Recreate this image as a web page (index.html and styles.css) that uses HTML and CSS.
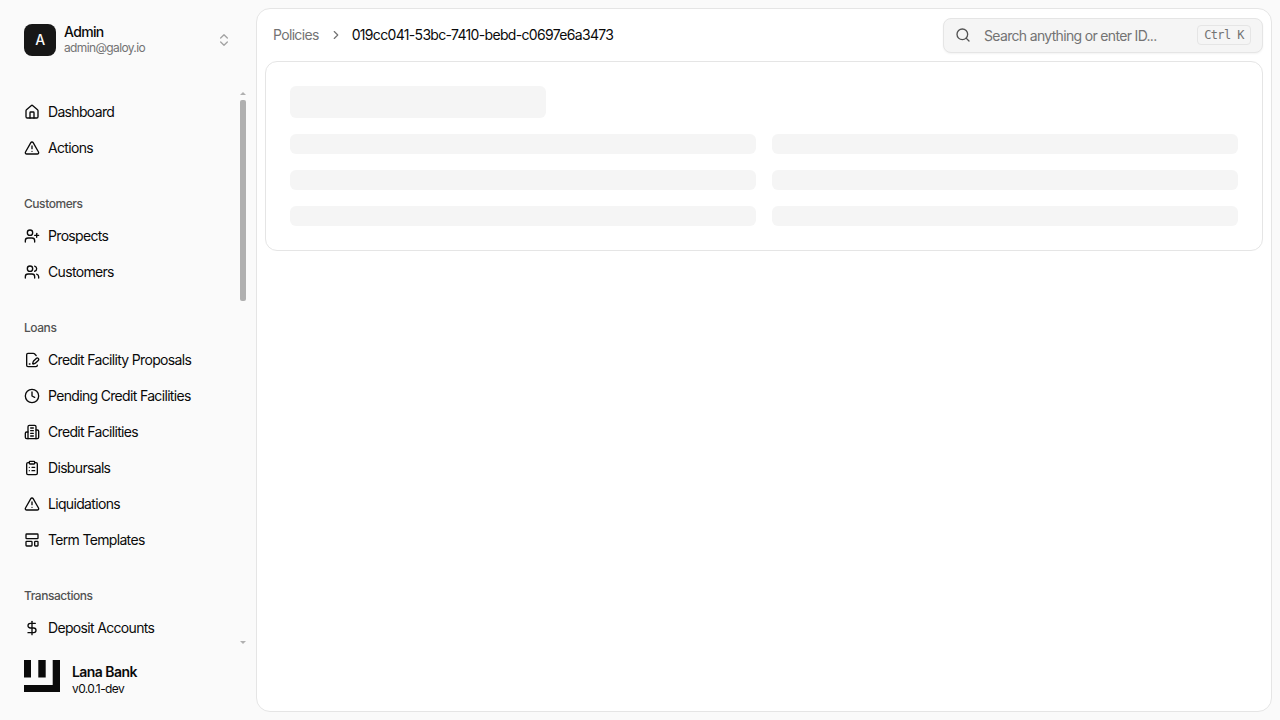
FILE: index.html
```html
<!DOCTYPE html>
<html lang="en">
<head>
<meta charset="utf-8">
<title>Lana Bank</title>
<link rel="stylesheet" href="styles.css">
</head>
<body>
<aside class="sidebar">
  <div class="user">
    <div class="avatar">A</div>
    <div class="user-text">
      <div class="user-name">Admin</div>
      <div class="user-email">admin@galoy.io</div>
    </div>
    <svg class="chevrons" viewBox="0 0 24 24"><path d="m7 15 5 5 5-5"/><path d="m7 9 5-5 5 5"/></svg>
  </div>
  <div class="nav-wrap">
    <nav class="nav">
      <div class="group">
        <a class="item"><svg class="icon" viewBox="0 0 24 24"><path d="M15 21v-8a1 1 0 0 0-1-1h-4a1 1 0 0 0-1 1v8"/><path d="M3 10a2 2 0 0 1 .709-1.528l7-5.999a2 2 0 0 1 2.582 0l7 5.999A2 2 0 0 1 21 10v9a2 2 0 0 1-2 2H5a2 2 0 0 1-2-2z"/></svg>Dashboard</a>
        <a class="item"><svg class="icon" viewBox="0 0 24 24"><path d="m21.73 18-8-14a2 2 0 0 0-3.48 0l-8 14A2 2 0 0 0 4 21h16a2 2 0 0 0 1.73-3"/><path d="M12 9v4"/><path d="M12 17h.01"/></svg>Actions</a>
      </div>
      <div class="group">
        <div class="label">Customers</div>
        <a class="item"><svg class="icon" viewBox="0 0 24 24"><path d="M16 21v-2a4 4 0 0 0-4-4H6a4 4 0 0 0-4 4v2"/><circle cx="9" cy="7" r="4"/><path d="M19 8v6"/><path d="M22 11h-6"/></svg>Prospects</a>
        <a class="item"><svg class="icon" viewBox="0 0 24 24"><path d="M16 21v-2a4 4 0 0 0-4-4H6a4 4 0 0 0-4 4v2"/><circle cx="9" cy="7" r="4"/><path d="M22 21v-2a4 4 0 0 0-3-3.87"/><path d="M16 3.13a4 4 0 0 1 0 7.75"/></svg>Customers</a>
      </div>
      <div class="group">
        <div class="label">Loans</div>
        <a class="item"><svg class="icon" viewBox="0 0 24 24"><path d="m18.226 5.226-2.52-2.52A2.4 2.4 0 0 0 14 2H6a2 2 0 0 0-2 2v16a2 2 0 0 0 2 2h12a2 2 0 0 0 2-2v-.351"/><path d="M21.378 12.626a1 1 0 0 0-3.004-3.004l-4.01 4.012a2 2 0 0 0-.506.854l-.837 2.87a.5.5 0 0 0 .62.62l2.87-.837a2 2 0 0 0 .854-.506z"/><path d="M8 18h1"/></svg>Credit Facility Proposals</a>
        <a class="item"><svg class="icon" viewBox="0 0 24 24"><circle cx="12" cy="12" r="10"/><path d="M12 6v6l4 2"/></svg>Pending Credit Facilities</a>
        <a class="item"><svg class="icon" viewBox="0 0 24 24"><path d="M6 22V4a2 2 0 0 1 2-2h8a2 2 0 0 1 2 2v18Z"/><path d="M6 12H4a2 2 0 0 0-2 2v6a2 2 0 0 0 2 2h2"/><path d="M18 9h2a2 2 0 0 1 2 2v9a2 2 0 0 1-2 2h-2"/><path d="M10 6h4"/><path d="M10 10h4"/><path d="M10 14h4"/><path d="M10 18h4"/></svg>Credit Facilities</a>
        <a class="item"><svg class="icon" viewBox="0 0 24 24"><rect x="8" y="2" width="8" height="4" rx="1"/><path d="M16 4h2a2 2 0 0 1 2 2v14a2 2 0 0 1-2 2H6a2 2 0 0 1-2-2V6a2 2 0 0 1 2-2h2"/><path d="M12 11h4"/><path d="M12 16h4"/><path d="M8 11h.01"/><path d="M8 16h.01"/></svg>Disbursals</a>
        <a class="item"><svg class="icon" viewBox="0 0 24 24"><path d="m21.73 18-8-14a2 2 0 0 0-3.48 0l-8 14A2 2 0 0 0 4 21h16a2 2 0 0 0 1.73-3"/><path d="M12 9v4"/><path d="M12 17h.01"/></svg>Liquidations</a>
        <a class="item"><svg class="icon" viewBox="0 0 24 24"><rect x="3" y="3" width="18" height="7" rx="1"/><rect x="3" y="14" width="9" height="7" rx="1"/><rect x="16" y="14" width="5" height="7" rx="1"/></svg>Term Templates</a>
      </div>
      <div class="group">
        <div class="label">Transactions</div>
        <a class="item"><svg class="icon" viewBox="0 0 24 24"><line x1="12" x2="12" y1="2" y2="22"/><path d="M17 5H9.5a3.5 3.5 0 0 0 0 7h5a3.5 3.5 0 0 1 0 7H6"/></svg>Deposit Accounts</a>
      </div>
    </nav>
    <div class="scrollbar">
      <div class="arrow-up"></div>
      <div class="thumb"></div>
      <div class="arrow-down"></div>
    </div>
  </div>
  <div class="brand">
    <svg class="logo" viewBox="0 0 36 32"><path d="M0 0h7v17.500H0zM14.300 0h7.400v17.500h-7.400zM28.700 0H36v32H0v-7h28.700z"/></svg>
    <div class="brand-text">
      <div class="brand-name">Lana Bank</div>
      <div class="brand-version">v0.0.1-dev</div>
    </div>
  </div>
</aside>
<main class="main">
  <header class="topbar">
    <div class="crumbs">
      <span class="crumb-link">Policies</span>
      <svg class="crumb-sep" viewBox="0 0 24 24"><path d="m9 18 6-6-6-6"/></svg>
      <span class="crumb-current">019cc041-53bc-7410-bebd-c0697e6a3473</span>
    </div>
    <div class="search">
      <svg class="search-icon" viewBox="0 0 24 24"><path d="m21 21-4.34-4.34"/><circle cx="11" cy="11" r="8"/></svg>
      <span class="search-text">Search anything or enter ID...</span>
      <kbd class="kbd">Ctrl K</kbd>
    </div>
  </header>
  <section class="card">
    <div class="skel skel-title"></div>
    <div class="skel-grid">
      <div class="skel skel-row"></div>
      <div class="skel skel-row"></div>
      <div class="skel skel-row"></div>
      <div class="skel skel-row"></div>
      <div class="skel skel-row"></div>
      <div class="skel skel-row"></div>
    </div>
  </section>
</main>
</body>
</html>
```
FILE: styles.css
```css
* { box-sizing: border-box; }
html, body { height: 100%; }
body {
  margin: 0;
  display: flex;
  height: 720px;
  overflow: hidden;
  background: #fafafa;
  color: #0a0a0a;
  font-family: Inter, "Liberation Sans", sans-serif;
  font-size: 14px;
  line-height: 20px;
  letter-spacing: -0.67px;
}
.sidebar {
  width: 256px;
  flex: none;
  display: flex;
  flex-direction: column;
  height: 720px;
}
.user {
  display: flex;
  align-items: center;
  height: 88px;
  padding: 0 24px 8px;
  flex: none;
}
.avatar {
  width: 32px;
  height: 32px;
  border-radius: 8px;
  background: #171717;
  color: #fafafa;
  display: flex;
  align-items: center;
  justify-content: center;
  font-weight: 500;
}
.user-text { flex: 1; margin-left: 8px; }
.user-name { font-weight: 500; height: 16px; line-height: 16px; }
.user-email { font-size: 12px; line-height: 16px; color: #737373; letter-spacing: -0.64px; }
.chevrons {
  width: 16px;
  height: 16px;
  fill: none;
  stroke: #a3a3a3;
  stroke-width: 2;
  stroke-linecap: round;
  stroke-linejoin: round;
}
.nav-wrap {
  position: relative;
  flex: 1;
  min-height: 0;
  margin: 0 10px 0 8px;
}
.nav {
  height: 100%;
  padding-top: 8px;
  overflow: hidden;
  display: flex;
  flex-direction: column;
  gap: 23px;
}
.scrollbar {
  position: absolute;
  top: 0;
  right: 0;
  bottom: 0;
  width: 6px;
  display: flex;
  flex-direction: column;
}
.arrow-up {
  width: 0;
  height: 0;
  margin-top: 4px;
  border-left: 3px solid transparent;
  border-right: 3px solid transparent;
  border-bottom: 3px solid #b0b0b0;
}
.thumb {
  height: 201px;
  margin-top: 5px;
  background: #b0b0b0;
  border-radius: 2px;
}
.arrow-down {
  width: 0;
  height: 0;
  margin: auto 0 6px;
  border-left: 3px solid transparent;
  border-right: 3px solid transparent;
  border-top: 3px solid #b0b0b0;
}
.group { display: flex; flex-direction: column; gap: 4px; flex: none; }
.label {
  height: 29px;
  padding: 5px 16px 0;
  display: flex;
  align-items: center;
  font-size: 12px;
  font-weight: 500;
  color: #525252;
  letter-spacing: -0.45px;
}
.item {
  height: 32px;
  padding: 0 16px;
  display: flex;
  align-items: center;
  gap: 8px;
  color: #0a0a0a;
  border-radius: 6px;
}
.icon {
  width: 16px;
  height: 16px;
  flex: none;
  fill: none;
  stroke: currentColor;
  stroke-width: 2;
  stroke-linecap: round;
  stroke-linejoin: round;
}
.brand {
  height: 70px;
  flex: none;
  display: flex;
  align-items: flex-start;
  gap: 12px;
  padding: 10px 24px 0;
}
.logo { width: 36px; height: 32px; fill: #0a0a0a; flex: none; }
.brand-text { margin-top: 2px; }
.brand-name { font-weight: 600; line-height: 20px; letter-spacing: -0.55px; }
.brand-version { font-size: 12px; line-height: 14px; letter-spacing: -0.6px; }
.main {
  width: 1016px;
  height: 704px;
  margin-top: 8px;
  background: #fff;
  border: 1px solid #e5e5e5;
  border-radius: 14px;
  padding: 0 8px;
}
.topbar {
  height: 52px;
  display: flex;
  align-items: center;
  justify-content: space-between;
}
.crumbs { display: flex; align-items: center; padding-left: 8px; }
.crumb-link { color: #737373; }
.crumb-sep {
  width: 14px;
  height: 14px;
  margin: 0 9px 0 10px;
  fill: none;
  stroke: #737373;
  stroke-width: 2;
  stroke-linecap: round;
  stroke-linejoin: round;
}
.search {
  width: 320px;
  height: 35px;
  display: flex;
  align-items: center;
  padding: 0 11px;
  background: #f5f5f5;
  border: 1px solid #e5e5e5;
  border-radius: 8px;
  box-shadow: 0 1px 2px rgba(0,0,0,.05);
}
.search-icon {
  width: 16px;
  height: 16px;
  flex: none;
  fill: none;
  stroke: #525252;
  stroke-width: 2;
  stroke-linecap: round;
  stroke-linejoin: round;
}
.search-text { flex: 1; margin: 1px 0 0 13px; color: #737373; }
.kbd {
  height: 20px;
  width: 54px;
  display: flex;
  align-items: center;
  justify-content: center;
  border: 1px solid #e5e5e5;
  border-radius: 4px;
  font-family: "DejaVu Sans Mono", monospace;
  font-size: 12px;
  letter-spacing: -0.6px;
  color: #737373;
}
.card {
  height: 190px;
  background: #fff;
  border: 1px solid #e5e5e5;
  border-radius: 12px;
  padding: 24px;
}
.skel { background: #f5f5f5; border-radius: 6px; }
.skel-title { width: 256px; height: 32px; margin-bottom: 16px; }
.skel-grid { display: grid; grid-template-columns: 1fr 1fr; gap: 16px; }
.skel-row { height: 20px; }
```
